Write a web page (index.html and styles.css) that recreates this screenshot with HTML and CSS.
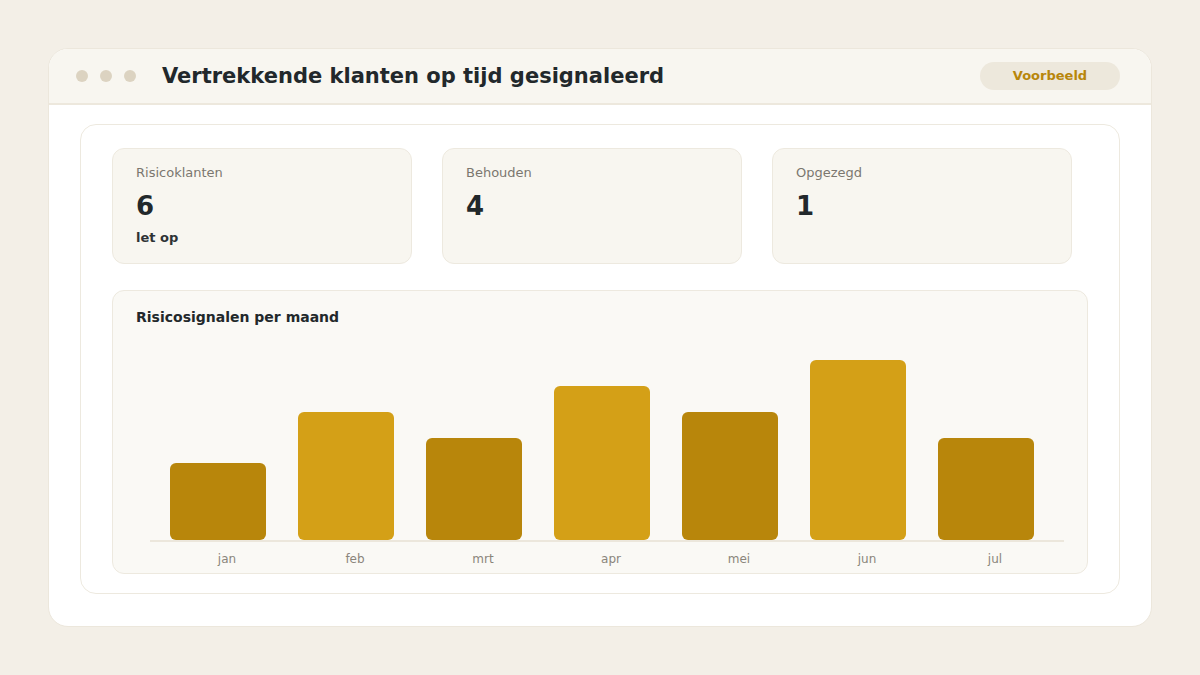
FILE: index.html
```html
<!DOCTYPE html>
<html lang="nl">
<head>
  <meta charset="utf-8">
  <title>Vertrekkende klanten op tijd gesignaleerd</title>
  <link rel="stylesheet" href="styles.css">
</head>
<body>
  <div class="window">
    <header class="titlebar">
      <div class="dots">
        <span class="dot"></span>
        <span class="dot"></span>
        <span class="dot"></span>
      </div>
      <h1 class="title">Vertrekkende klanten op tijd gesignaleerd</h1>
      <span class="badge">Voorbeeld</span>
    </header>

    <main class="content">
      <section class="panel">
        <div class="stats">
          <div class="stat">
            <div class="stat-label">Risicoklanten</div>
            <div class="stat-value">6</div>
            <div class="stat-note">let op</div>
          </div>
          <div class="stat">
            <div class="stat-label">Behouden</div>
            <div class="stat-value">4</div>
          </div>
          <div class="stat">
            <div class="stat-label">Opgezegd</div>
            <div class="stat-value">1</div>
          </div>
        </div>

        <div class="chart">
          <h2 class="chart-title">Risicosignalen per maand</h2>
          <div class="plot">
            <div class="bars">
              <div class="bar dark" style="height: 77px"></div>
              <div class="bar light" style="height: 128px"></div>
              <div class="bar dark" style="height: 102px"></div>
              <div class="bar light" style="height: 154px"></div>
              <div class="bar dark" style="height: 128px"></div>
              <div class="bar light" style="height: 180px"></div>
              <div class="bar dark" style="height: 102px"></div>
            </div>
            <div class="months">
              <span>jan</span>
              <span>feb</span>
              <span>mrt</span>
              <span>apr</span>
              <span>mei</span>
              <span>jun</span>
              <span>jul</span>
            </div>
          </div>
        </div>
      </section>
    </main>
  </div>
</body>
</html>
```

FILE: styles.css
```css
html, body {
  margin: 0;
  height: 100%;
}
body {
  background: #f3efe7;
  font-family: "DejaVu Sans", "Liberation Sans", sans-serif;
  color: #22282b;
  padding: 48px;
  box-sizing: border-box;
}
.window {
  width: 1104px;
  height: 579px;
  background: #fff;
  border: 1px solid #ece7dc;
  border-radius: 20px;
  box-sizing: border-box;
  overflow: hidden;
}
.titlebar {
  height: 56px;
  box-sizing: border-box;
  background: #f8f6f0;
  border-bottom: 2px solid #ede8dd;
  display: flex;
  align-items: center;
  padding: 0 31px 0 27px;
}
.dots {
  display: flex;
  gap: 12px;
}
.dot {
  width: 12px;
  height: 12px;
  border-radius: 50%;
  background: #dcd3c1;
}
.title {
  margin: 0 0 0 26px;
  font-size: 21px;
  font-weight: bold;
  flex: 1;
}
.badge {
  width: 140px;
  height: 28px;
  line-height: 28px;
  text-align: center;
  border-radius: 14px;
  background: #ede8dc;
  color: #b8860b;
  font-size: 13px;
  font-weight: bold;
}
.content {
  padding: 19px 31px 0 31px;
}
.panel {
  height: 470px;
  box-sizing: border-box;
  border: 1px solid #ede9df;
  border-radius: 16px;
  padding: 23px 31px 0 31px;
}
.stats {
  display: grid;
  grid-template-columns: repeat(3, 300px);
  gap: 30px;
}
.stat {
  height: 116px;
  box-sizing: border-box;
  background: #f8f6f0;
  border: 1px solid #ede9df;
  border-radius: 12px;
  padding: 15px 23px;
}
.stat-label {
  font-size: 13px;
  line-height: 18px;
  color: #7b776f;
}
.stat-value {
  margin-top: 9px;
  font-size: 26px;
  line-height: 30px;
  font-weight: bold;
}
.stat-note {
  margin-top: 8px;
  font-size: 13px;
  line-height: 18px;
  font-weight: bold;
  color: #2e3235;
}
.chart {
  margin-top: 26px;
  height: 284px;
  box-sizing: border-box;
  background: #faf9f5;
  border: 1px solid #ede9df;
  border-radius: 12px;
  padding: 17px 23px 0 23px;
}
.chart-title {
  margin: 0;
  font-size: 14px;
  line-height: 18px;
  font-weight: bold;
}
.plot {
  margin-left: 14px;
  margin-top: 14px;
}
.bars {
  height: 200px;
  display: flex;
  align-items: flex-end;
  gap: 32px;
  padding-left: 20px;
  border-bottom: 2px solid #ece7dc;
}
.bar {
  width: 96px;
  border-radius: 6px;
}
.bar.dark {
  background: #b8860b;
}
.bar.light {
  background: #d4a017;
}
.months {
  display: grid;
  grid-template-columns: repeat(7, 128px);
  padding-left: 13px;
  margin-top: 9px;
  font-size: 12px;
  line-height: 16px;
  color: #8a857b;
  text-align: center;
}
```
